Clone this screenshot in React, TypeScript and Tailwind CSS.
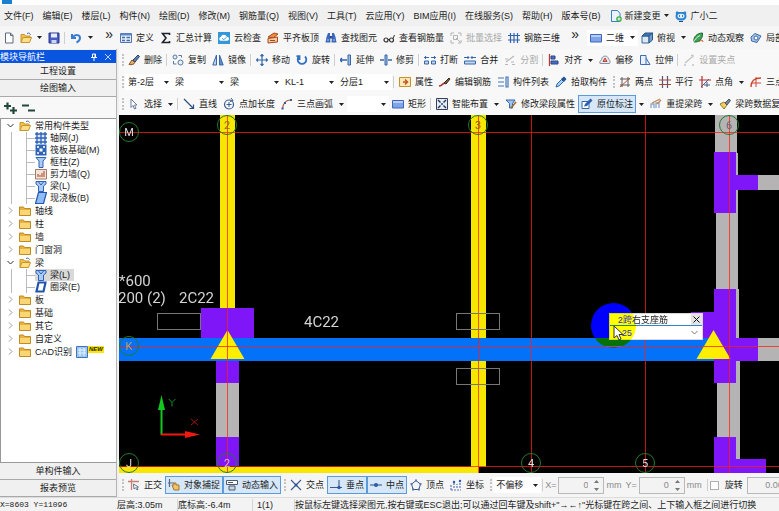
import { ReactNode } from 'react';
import clsx from 'clsx';

const ICONS: Record<string, ReactNode> = {
  file: <path d="M2.500 1h5l2.500 2.500V11h-7.500zM7.500 1v2.500H10" fill="#fff" stroke="#5b6b80" />,
  open: (
    <>
      <path d="M1 10.500V2.500h3.500l1 1.500H10v2" fill="#f3c34d" stroke="#c9952f" />
      <path d="M1 10.500 3 5.500h8.500l-2 5z" fill="#ffdf83" stroke="#c9952f" />
      <path d="M7 1.500c2-1 3 0 3.500 1.200" fill="none" stroke="#3a6ea8" />
    </>
  ),
  save: (
    <>
      <path d="M1 1h10v10H1z" fill="#4a5cc4" stroke="#2a3688" />
      <path d="M3 1.500h6v4H3z" fill="#e9eefc" />
      <path d="M3.500 8h5v3h-5z" fill="#cdd5f4" />
    </>
  ),
  undo: <path d="M2 2v4h4M2.500 5.500C5 2 10 2.500 10 6c0 2-1.500 3.500-3.500 4.500" fill="none" stroke="#3a7bd0" strokeWidth="2" />,
  define: (
    <>
      <path d="M.5 1.500h11v9H.500z" fill="#e5edf9" stroke="#5274b0" />
      <path d="M.5 1.500h11v2H.500z" fill="#5c86cc" />
      <path d="M2 5.500h3M2 8.500h3M6.500 5.500H10M6.500 8.500H10" stroke="#4a6cab" strokeWidth="1.500" />
    </>
  ),
  sum: <path d="M9.500 3V1.500H2.500L6 6l-3.500 4.500h7V9" fill="none" stroke="#1d2430" strokeWidth="1.600" />,
  cloud: (
    <>
      <rect width="12" height="12" fill="#3497d8" />
      <path d="M2.500 8.800a2 2 0 0 1 .3-3.800 3.200 3.200 0 0 1 6-.2 2 2 0 0 1 .5 4z" fill="#fff" />
      <path d="m4.200 6.300 1.600 1.500 2.500-2.600" fill="none" stroke="#3497d8" />
    </>
  ),
  slab: (
    <>
      <path d="M1 5 7 1l4 1-5 4z" fill="#f08c3c" stroke="#a8481c" />
      <path d="M1 6.500 10.500 5v5L1 11z" fill="#f4c9a0" stroke="#a8481c" />
      <path d="M3 8.500h5" stroke="#a8481c" />
    </>
  ),
  find: (
    <>
      <path d="M3 1h2v3l.5 6.500h-5L1.500 5zM7 1h2l1.500 4 1 5.500h-5L7 4z" fill="#3b68b8" />
      <path d="M5 4h2v2.500H5z" fill="#254a90" />
      <path d="M2 8h2M8 8h2" stroke="#b5cdf2" />
    </>
  ),
  glasses: (
    <>
      <circle cx="3" cy="8" r="2" fill="none" stroke="#333" strokeWidth="1.200" />
      <circle cx="8.500" cy="8" r="2" fill="none" stroke="#333" strokeWidth="1.200" />
      <path d="M5 7.500h1.500M10 6.500 11.500 3" stroke="#333" fill="none" />
    </>
  ),
  batch: (
    <g stroke="#b3b3b3" fill="none">
      <path d="M1 4V1h3M8 1h3v3M11 8v3H8M4 11H1V8" />
      <path d="M3.500 3.500h4v4h-4zM6 6l4 4" />
    </g>
  ),
  rebar: <path d="M2.500 1v10M6 1v10M9.500 1v10M0 3.500h12M0 8h12" stroke="#3463ae" strokeWidth="1.200" fill="none" />,
  rect: (
    <>
      <path d="M.5 2.500h11v7.500H.500z" fill="#7fa4ea" stroke="#4166b8" />
      <path d="M1 3h10v2H1z" fill="#b7cdf7" />
    </>
  ),
  cube: (
    <>
      <path d="M1 4h7v7H1z" fill="#dbe8f6" stroke="#3b6797" />
      <path d="m1 4 3-3h7.500L8 4z" fill="#3f77b5" stroke="#2a5688" />
      <path d="m8 4 3.500-3v7L8 11z" fill="#6d9bcb" stroke="#2a5688" />
    </>
  ),
  orbit: (
    <>
      <path d="M2 10C1 5 5 1 10.500 1 11 7 7 10.500 2 10z" fill="#3aa655" stroke="#1d6b34" />
      <path d="M1 11c2-4 4-6 7-7.500" stroke="#e5f5e8" fill="none" />
      <path d="M7 9.500 10 8l1 2" stroke="#d06030" fill="none" />
    </>
  ),
  part: (
    <>
      <path d="m1 5 4-3.500L11 4 7 10.500 1.500 9z" fill="#a8c6ea" stroke="#3c6aa5" />
      <circle cx="6" cy="6" r="2" fill="#fff" stroke="#3c6aa5" />
    </>
  ),
  erase: (
    <>
      <path d="m5 6 5-5 1.500 1.500L7 8z" fill="#5d7fae" stroke="#2d4468" />
      <path d="M1 10.500 4 6l3 2.500C6 10.500 3.500 11 1 10.500z" fill="#e3b06a" stroke="#8a4b22" />
    </>
  ),
  copy: (
    <g fill="#e6eef8" stroke="#5878a5">
      <circle cx="3" cy="3" r="2" />
      <circle cx="8.500" cy="8.500" r="2.500" />
      <path d="M6.500 1.500h3v2M1.500 7v3h3" fill="none" />
    </g>
  ),
  mirror: (
    <>
      <path d="M4.500 1v10H.800z" fill="#bcd4f2" stroke="#3a68a8" />
      <path d="M7.500 1v10h3.700z" fill="#5c8dd0" stroke="#3a68a8" />
    </>
  ),
  move: <path d="M6 .500v11M.500 6h11M4.500 2 6 .500 7.500 2M4.500 10 6 11.500 7.500 10M2 4.500.500 6 2 7.500M10 4.500 11.500 6 10 7.500" fill="none" stroke="#3566a8" strokeWidth="1.200" />,
  rotate: <path d="M3 2.500a4.300 4.300 0 1 0 6 0M3.500 6V2.200H.500" fill="none" stroke="#2f6fc4" strokeWidth="1.800" />,
  extend: (
    <>
      <path d="M0 6h7M2 4 0 6l2 2" fill="none" stroke="#3566a8" strokeWidth="1.300" />
      <path d="M8 1h2.500v10H8z" fill="#9dbce4" stroke="#3566a8" />
    </>
  ),
  trim: (
    <>
      <path d="M0 6h4M8 6h4" stroke="#3566a8" strokeWidth="1.300" />
      <path d="M5 1h2v10H5z" fill="#9dbce4" stroke="#3566a8" />
    </>
  ),
  split: (
    <>
      <path d="M.5 7h4v3h-4zM7.500 7h4v3h-4z" fill="#c5d8f1" stroke="#3566a8" />
      <path d="M0 3.500h5M7 3.500h5M2 2 .500 3.500 2 5M10 2l1.500 1.500L10 5" fill="none" stroke="#3566a8" />
    </>
  ),
  merge: (
    <>
      <path d="M.5 7h11v3H.500z" fill="#c5d8f1" stroke="#3566a8" />
      <path d="M0 3.500h5M7 3.500h5M3.500 2 5 3.500 3.500 5M8.500 2 7 3.500 8.500 5" fill="none" stroke="#3566a8" />
    </>
  ),
  cut: <path d="M1 10.500h3M8 10.500h3M2 8l8-6M1 5h3M7 8h3" fill="none" stroke="#b8b8b8" strokeWidth="1.200" />,
  align: (
    <>
      <path d="M1.500 0v12" stroke="#c0392b" strokeWidth="1.300" />
      <path d="M3 2h4v3H3zM3 7h7v3H3z" fill="#4a6fc0" stroke="#274790" />
    </>
  ),
  offset: (
    <>
      <path d="M1 9.500c-1-2 1-3 1.500-4C3 1 9 1 9.500 5c1 1 2.500 2.500 1 4.500z" fill="#e9e9ef" stroke="#8a8fa2" />
      <path d="M4 7.500 6 4l2 3.500z" fill="#e38d7c" stroke="#b44a3a" />
    </>
  ),
  stretch: <path d="M1.500 1.500H7v9H1.500zM7 4l4 6.500H5" fill="#eaf1fb" stroke="#3b6cb5" />,
  grip: <path d="M1 11h2M9 11h2M2 9l7-6M8 1.500h2v2" fill="none" stroke="#c3c3c3" strokeWidth="1.300" />,
  prop: (
    <>
      <path d="M.5 1.500h11v9H.500z" fill="#fbe9b5" stroke="#c48f2d" />
      <path d="M4 6h5M6 3.500 8.500 6 6 8.500" fill="none" stroke="#c4542a" strokeWidth="1.500" />
    </>
  ),
  editbar: (
    <>
      <path d="M0 10c3 0 3-2.500 6-3" fill="none" stroke="#a33" strokeWidth="1.500" />
      <path d="m5 7 5-5 1 1-4 5z" fill="#7c5a3a" stroke="#3e2b1b" />
    </>
  ),
  list: <path d="M1 2h6M1 6h6M1 10h6M9 1v10h2V1z" fill="none" stroke="#4576ba" strokeWidth="1.200" />,
  pick: (
    <>
      <path d="m1 11 1-3 4.500-4.500 2 2L4 10z" fill="#a8d0f5" stroke="#2c6ab0" />
      <path d="m6 3 3-2.500L11.500 3 9 6z" fill="#24558f" />
    </>
  ),
  two: (
    <>
      <path d="M3 1v10M9 1v10M1 9h10M1 3h10" stroke="#5c5c5c" fill="none" />
      <path d="m1 11 10-9" stroke="#b5502e" />
    </>
  ),
  parallel: (
    <>
      <path d="M3.500 0v12M8.500 0v12" stroke="#4b5a86" strokeWidth="1.200" />
      <path d="M0 4h12M0 8.500h12" stroke="#b5402e" strokeWidth="1.200" />
    </>
  ),
  angle: (
    <>
      <path d="M3 0v12M0 4h12" stroke="#b5302e" strokeWidth="1.200" />
      <path d="m2 11 8-8M8 6v5M5 9h6" stroke="#4b5a86" fill="none" />
    </>
  ),
  axis3: (
    <>
      <path d="M1 11C1 5 4 2 11 2" stroke="#d0442e" strokeWidth="1.400" fill="none" />
      <path d="M6 1v10M2 7h9" stroke="#d0442e" />
    </>
  ),
  pointer: <path d="M3 1v8.500l2-2 1.500 3.500 1.500-.7L6.500 7H9z" fill="#fff" stroke="#6b7d9c" />,
  line: (
    <>
      <path d="m1 1 9 9" stroke="#2f4f80" strokeWidth="1.200" />
      <path d="M10.500 6.500v4h-4" fill="none" stroke="#2f4f80" strokeWidth="1.200" />
    </>
  ),
  pointlen: (
    <>
      <circle cx="6" cy="6.500" r="4.500" fill="none" stroke="#3b5c92" strokeWidth="1.200" />
      <path d="M6 4v5M3.500 6.500h5M8 0l2 2.500-3 1" fill="none" stroke="#3b5c92" />
    </>
  ),
  arc: (
    <>
      <path d="M1.500 11C2 5 5 2 10 2" fill="none" stroke="#b55a50" strokeWidth="1.200" />
      <path d="M.5 9.500h2v2h-2zM9 1h2v2H9zM3 4h2v2H3z" fill="#3b5c92" />
    </>
  ),
  smart: (
    <>
      <path d="M.5.500h11v11H.500z" fill="#e8edf5" stroke="#33435e" />
      <path d="m2 2 2.500 2.500M10 2 7.500 4.500M2 10l2.500-2.500M10 10 7.500 7.500" stroke="#22324e" strokeWidth="1.400" />
      <path d="M5 5h2v2H5z" fill="#3f73c0" />
    </>
  ),
  beamedit: (
    <>
      <path d="M1 2h9L7.500 5.500V10h-3V5.500z" fill="#9fc3ef" stroke="#3268ae" />
      <path d="m6 10 5-6" stroke="#a46a2c" strokeWidth="1.600" />
    </>
  ),
  inplace: (
    <>
      <path d="M1 3.500h7v7H1z" fill="#fff" stroke="#3268ae" />
      <path d="m3 8.500 1-2.500 5.500-5.500 2 2L6 8z" fill="#2d62b0" />
    </>
  ),
  respan: (
    <>
      <path d="M1 10V6h3v4M6 10V5h3v5" fill="none" stroke="#8ba6cc" strokeWidth="1.300" />
      <path d="m2 5 8-4M7 6l4-4" stroke="#c08658" strokeWidth="1.300" />
    </>
  ),
  spancopy: (
    <>
      <path d="m1 6 4-2 3 3-3 4z" fill="#f1cf63" stroke="#9b7b1f" />
      <path d="m6 5 4-4 1.500 1.500L8 7z" fill="#7b8493" stroke="#4d5561" />
    </>
  ),
  newdoc: (
    <>
      <path d="M1.500.500h6l2.500 3v8h-8.500z" fill="#eaf3fd" stroke="#3d7dbb" />
      <circle cx="9" cy="9" r="2.800" fill="#3eb049" />
      <path d="M9 7.500v3M7.500 9h3" stroke="#fff" />
    </>
  ),
  mascot: (
    <>
      <path d="M1 4C0 1.500 2 1 3.500 2h5C10 1 12 1.500 11 4c1.500 4-1 6.500-5 6.500S-.500 8 1 4z" fill="#2f84d2" />
      <ellipse cx="6" cy="6" rx="3.500" ry="2.300" fill="#d9efff" />
      <path d="M4.500 5.300v1.400M7.500 5.300v1.400M4 11.500h4" stroke="#14508c" />
    </>
  ),
  ortho: (
    <>
      <path d="M3.500 0v11M0 2.500h11" stroke="#c98074" strokeWidth="1.300" />
      <path d="m5.500 5 .5 5 1.500-1.300L9 11l1-.700-1.300-2.200L10.500 8z" fill="#fff" stroke="#67748c" />
    </>
  ),
  snap: (
    <>
      <path d="M1.500 0v8M0 4h6" stroke="#59677f" strokeWidth="1.200" />
      <path d="M4 6h2V4h2v2h3v5H6z" fill="#f0c46a" stroke="#a3742a" />
    </>
  ),
  dyn: (
    <>
      <path d="M.5 1.500h11v4H.500z" fill="#fff" stroke="#4c5a70" />
      <path d="M3 7h6v4H3z" fill="#cdd5e0" stroke="#4c5a70" />
      <path d="M2 3.500h5" stroke="#4c5a70" />
    </>
  ),
  cross: (
    <>
      <path d="m1 1 10 10M11 1 1 11" stroke="#405a86" strokeWidth="1.100" />
      <circle cx="6" cy="6" r="1.500" fill="#2859a8" />
    </>
  ),
  perp: (
    <>
      <path d="M0 8.500h12M9 1v7.500" stroke="#405a86" strokeWidth="1.100" />
      <circle cx="9" cy="8.500" r="1.700" fill="#2859a8" />
    </>
  ),
  mid: (
    <>
      <path d="M0 6h12" stroke="#405a86" strokeWidth="1.100" />
      <circle cx="6" cy="6" r="2" fill="#2859a8" />
    </>
  ),
  vertex: (
    <>
      <path d="m6 1.500 4.500 3.700-1.700 5.300H3.200L1.500 5.200z" fill="none" stroke="#405a86" />
      <path d="M5 .500h2v2H5zM9.500 4h2v2h-2zM.500 4h2v2h-2zM2 9.500h2v2H2zM8 9.500h2v2H8z" fill="#5a7bb5" />
    </>
  ),
  coord: (
    <>
      <path d="M1 11V5M1 11h10M4 9V3M7 9V5M10 9V1" stroke="#5a7bb5" strokeWidth="1.200" strokeDasharray="2 1" />
      <circle cx="4" cy="3" r="1.200" fill="#2859a8" />
      <circle cx="10" cy="2" r="1.200" fill="#2859a8" />
    </>
  ),
  folder: (
    <>
      <path d="M.5 2h4l1 1.500h6v7H.500z" fill="#e8b23f" stroke="#c08a24" />
      <path d="M1 5h10v5H1z" fill="#fbd675" />
    </>
  ),
  grid: (
    <>
      <path d="M.5.500h11v11H.500z" fill="#dce8fa" />
      <path d="M2 0v12M6 0v12M10 0v12M0 2h12M0 6h12M0 10h12" stroke="#2f62b5" strokeWidth="1.300" />
    </>
  ),
  raft: (
    <>
      <path d="M.5.500h11v11H.500z" fill="#2f62b5" />
      <path d="M2 2h2v2H2zM8 2h2v2H8zM2 8h2v2H2zM8 8h2v2H8z" fill="#cfe0f8" />
      <path d="M4.500 4.500h3v3h-3z" fill="#fff" />
    </>
  ),
  column: <path d="M1 1.500h10L8 5v6.500H4V5z" fill="#a9cbf4" stroke="#2f62b5" />,
  wall: (
    <>
      <path d="M.5 1.500h11v9.500H.500z" fill="#f3e4da" stroke="#a77a64" />
      <path d="M3 9V6M5 9V7M7 9V5M9 9V3" stroke="#b55a40" strokeWidth="1.200" />
    </>
  ),
  beam: (
    <>
      <path d="M1 1.500h10v2.500L8.500 6v5.500h-5V6L1 4z" fill="#a9cbf4" stroke="#2f62b5" />
      <path d="m3.500 2 2.500 3 2.500-3" fill="none" stroke="#2f62b5" />
    </>
  ),
  floor: <path d="M3.500.500h8l-3 11h-8z" fill="#8ebcf5" stroke="#2355ad" strokeWidth="1.200" />,
  ring: <path d="M3.500 1.500h7l-2 9h-7z" fill="#fff" stroke="#2355ad" strokeWidth="2.200" />,
  cad: (
    <>
      <path d="M.5.500h11v11H.500z" fill="#9cc5f2" stroke="#3e76b8" />
      <path d="M2 4h8M2 7h8M4 2v8M8 2v8" stroke="#e9f3fe" />
    </>
  ),
};

const Icon = ({ name }: { name: string }) => (
  <svg className="w-3 h-3 shrink-0" viewBox="0 0 12 12" fill="none" aria-hidden="true">
    {ICONS[name]}
  </svg>
);

const Arrow = () => (
  <svg className="w-[5px] h-[3px] mx-[3px] shrink-0" viewBox="0 0 5 3" aria-hidden="true">
    <path d="M0 0h5L2.500 3z" fill="#222" />
  </svg>
);

const Sep = () => <span className="w-px h-3 ml-px mr-0.5 bg-[#cfcfcf] shrink-0" />;
const Grip = () => <span className="h-3 ml-[3px] w-[3px] border-l-2 border-dotted border-[#c4c4c4] shrink-0" />;

interface ToolProps {
  icon: string;
  label: string;
  menu?: boolean;
  disabled?: boolean;
  pressed?: boolean;
}

const Tool = ({ icon, label, menu, disabled, pressed }: ToolProps) => (
  <>
    <button
      type="button"
      disabled={disabled}
      aria-pressed={pressed}
      className={clsx(
        'flex items-center gap-1 shrink-0 whitespace-nowrap',
        pressed ? 'h-[18px] px-0.5 border border-[#5a9bd8] bg-[#d5e7f8]' : 'px-[3px]',
        disabled && 'text-[#a8a8a8]'
      )}
    >
      <Icon name={icon} />
      {label}
    </button>
    {menu && <Arrow />}
  </>
);

const Combo = ({ name, value, className }: { name: string; value: string; className: string }) => (
  <label className={clsx('relative flex items-center h-4 bg-white shrink-0', className)}>
    <select aria-label={name} className="appearance-none w-full h-4 pl-[3px] pr-3 bg-transparent outline-none">
      <option>{value}</option>
    </select>
    <span className="absolute right-0 pointer-events-none">
      <Arrow />
    </span>
  </label>
);

const MENUS = [
  '文件(F)',
  '编辑(E)',
  '楼层(L)',
  '构件(N)',
  '绘图(D)',
  '修改(M)',
  '钢筋量(Q)',
  '视图(V)',
  '工具(T)',
  '云应用(Y)',
  'BIM应用(I)',
  '在线服务(S)',
  '帮助(H)',
  '版本号(B)',
];

interface TreeNode {
  label: string;
  children?: { icon: string; label: string; selected?: boolean }[];
  isNew?: boolean;
}

const TREE: TreeNode[] = [
  {
    label: '常用构件类型',
    children: [
      { icon: 'grid', label: '轴网(J)' },
      { icon: 'raft', label: '筏板基础(M)' },
      { icon: 'column', label: '框柱(Z)' },
      { icon: 'wall', label: '剪力墙(Q)' },
      { icon: 'beam', label: '梁(L)' },
      { icon: 'floor', label: '现浇板(B)' },
    ],
  },
  { label: '轴线' },
  { label: '柱' },
  { label: '墙' },
  { label: '门窗洞' },
  {
    label: '梁',
    children: [
      { icon: 'beam', label: '梁(L)', selected: true },
      { icon: 'ring', label: '圈梁(E)' },
    ],
  },
  { label: '板' },
  { label: '基础' },
  { label: '其它' },
  { label: '自定义' },
  { label: 'CAD识别', isNew: true },
];

const TreeGroup = ({ node }: { node: TreeNode }) => (
  <li>
    <div className="flex items-center h-[13px]">
      <svg className="w-[7px] h-[7px] ml-1.5 mr-[5px]" viewBox="0 0 7 7" fill="none" aria-hidden="true">
        <path d={node.children ? 'M.5 2l3 3 3-3' : 'M2 .500l3 3-3 3'} stroke={node.children ? '#333' : '#999'} />
      </svg>
      <Icon name={node.children ? 'open' : 'folder'} />
      <span className="ml-1">{node.label}</span>
      {node.isNew && (
        <span className="flex items-start ml-1">
          <Icon name="cad" />
          <b className="bg-[#ffe600] text-[6px] leading-[7px] italic px-px">NEW</b>
        </span>
      )}
    </div>
    {node.children && (
      <ul className="ml-[10px] border-l border-[#bbb]">
        {node.children.map((child) => (
          <li key={child.label} className="flex items-center h-3 ml-[14px] border-l border-[#bbb]">
            <span className="w-2 h-px bg-[#bbb]" />
            <button
              type="button"
              className={clsx('flex items-center h-3 gap-[3px] pr-1 leading-3', child.selected && 'bg-[#d9d9d9]')}
            >
              <Icon name={child.icon} />
              {child.label}
            </button>
          </li>
        ))}
      </ul>
    )}
  </li>
);

const PanelButton = ({ label }: { label: string }) => (
  <button type="button" className="block w-full h-[17px] leading-4 text-[9px] bg-[#f0f0f0] border-b border-[#a9a9a9]">
    {label}
  </button>
);

const Sidebar = () => (
  <aside className="flex flex-col w-[117px] shrink-0 border-r border-[#b5b5b5]">
    <div className="flex items-center h-[13px] mt-px bg-[#0a55e0] text-white">
      <h2>模块导航栏</h2>
      <button type="button" aria-label="固定" className="ml-auto">
        <svg className="w-2 h-2" viewBox="0 0 8 8" fill="none" stroke="#fff">
          <path d="M2.500 1h3v3.500h-3zM1 4.500h6M4 4.500V8M5 1v3.500" />
        </svg>
      </button>
      <button type="button" aria-label="关闭" className="ml-1.5 mr-1">
        <svg className="w-2 h-2" viewBox="0 0 8 8" fill="none" stroke="#b9d0ff">
          <path d="m1 1 6 6M7 1 1 7" />
        </svg>
      </button>
    </div>
    <PanelButton label="工程设置" />
    <PanelButton label="绘图输入" />
    <div className="flex items-center gap-1 h-[22px] pl-1 border-b border-[#999] bg-[#f8f8f8]">
      <button type="button" aria-label="展开全部">
        <svg className="w-3.5 h-3" viewBox="0 0 14 12" stroke="#23493c" strokeWidth="2.200">
          <path d="M0 4h7M3.500.500v7M6 8.500h7M9.500 5v7" />
        </svg>
      </button>
      <button type="button" aria-label="折叠全部">
        <svg className="w-3.5 h-3" viewBox="0 0 14 12" stroke="#23493c" strokeWidth="2">
          <path d="M0 3.500h7M6 8.500h7" />
        </svg>
      </button>
    </div>
    <ul className="flex-1 min-h-0 overflow-hidden bg-white border-l border-b border-[#999]">
      {TREE.map((node) => (
        <TreeGroup key={node.label} node={node} />
      ))}
    </ul>
    <PanelButton label="单构件输入" />
    <PanelButton label="报表预览" />
  </aside>
);

const BUBBLES = [
  { x: 10, y: 17, text: 'M', color: '#ddd' },
  { x: 10, y: 231, text: 'K', color: '#c2a25a' },
  { x: 10, y: 348, text: 'J', color: '#ddd' },
  { x: 108, y: 10, text: '2', color: '#8a7420' },
  { x: 359, y: 10, text: '3', color: '#8a5a20' },
  { x: 610, y: 10, text: '6', color: '#5d6a78' },
  { x: 108, y: 348, text: '2', color: '#c9b8e8' },
  { x: 412, y: 348, text: '4', color: '#ddd' },
  { x: 526, y: 348, text: '5', color: '#ddd' },
];

const Drawing = () => (
  <svg className="block w-full h-full" role="img" aria-label="梁平面图">
    <g fill="#b5b3b3">
      <path d="M97 268h23v54H97z" />
      <path d="M596 0h22v38h-22zM616 38h3v60h-3zM597 98h22v76h-22zM617 174h3v50h-3zM598 246h23v98h-23z" />
      <path d="M639 60h2000v15H639zM639 223h2000v23H639z" />
    </g>
    <path d="M101 0h15v193h-15zM352 0h15v352h-15zM0 352h360v6H0z" fill="#f7e600" />
    <g fill="#7f16f8">
      <path d="M82 193h53v30H82zM97 245h23v23H97zM97 322h23v29H97z" />
      <path d="M595 37h22v23h22v15h-22v23h-22z" />
      <path d="M595 174h22v49h22v23h-22v22h-22V223h-23v-26h23z" />
      <path d="M595 322h22v22h30v14h-52z" />
    </g>
    <path d="M0 223h595v23H0z" fill="#0472f8" />
    <path d="m108.500 215 17 29h-34zM594.500 215l17 29h-34z" fill="#ffee00" />
    <g fill="none" stroke="#ff1e12" strokeOpacity="0.750" shapeRendering="crispEdges">
      <path d="M0 17.500h3000M0 231.500h3000M0 351.500h3000" />
      <path d="M108.500 0v358M359.500 0v358M412.500 0v358M526.500 0v358M610.500 0v358" />
    </g>
    <g fill="none" stroke="#777" shapeRendering="crispEdges">
      <path d="M38.500 198.500h43v16h-43zM337.500 198.500h43v16h-43zM337.500 253.500h43v16h-43z" />
    </g>
    {BUBBLES.map(({ x, y, text, color }) => (
      <g key={`${x}-${y}`}>
        <circle cx={x} cy={y} r="9.500" fill="none" stroke="#237a2c" />
        <text x={x} y={y + 4} textAnchor="middle" fill={color} className="text-[11px] font-['Roboto',sans-serif]">
          {text}
        </text>
      </g>
    ))}
    <g fill="#d4d4d4" className="text-[15px] font-['Roboto',sans-serif]">
      <text x="0" y="171">*600</text>
      <text x="-1" y="188">200 (2)</text>
      <text x="60" y="188">2C22</text>
      <text x="185" y="212">4C22</text>
    </g>
    <path d="M42.500 320v-26" stroke="#12c81e" strokeWidth="2" />
    <path d="m42.500 280 3.500 15h-7z" fill="#12c81e" />
    <path d="M42 319.500h26" stroke="#f01a10" strokeWidth="2" />
    <path d="m81 319.500-15 3.500v-7z" fill="#f01a10" />
    <path d="m50 284 3 3.500 3.500-3.500M53 287.500v4" stroke="#178a22" fill="none" />
    <path d="m72 304 7 6M79 304l-7 6" stroke="#a01414" fill="none" />
  </svg>
);

// The editor sits on the right support of the span, with the pointer highlight on top.
const SupportEditor = () => (
  <div className="absolute left-[490px] top-[198px] w-[94px] bg-white border border-[#d8d8d8]">
    <div className="flex items-center h-3 pl-2 border-b border-[#2b86d0]">
      <label htmlFor="support" className="whitespace-nowrap">
        2跨右支座筋
      </label>
      <button type="button" aria-label="关闭" className="ml-auto h-[11px] px-0.5 bg-[#e4e4e4]">
        <svg className="w-[7px] h-[7px]" viewBox="0 0 7 7" stroke="#111">
          <path d="m.5.500 6 6M6.500.500l-6 6" />
        </svg>
      </button>
    </div>
    <div className="flex items-center h-[13px] pl-3 pr-1">
      <input id="support" defaultValue="25" className="w-0 flex-1 h-3 outline-none" />
      <svg className="w-[7px] h-[5px]" viewBox="0 0 7 5" fill="none" stroke="#777">
        <path d="m.5 1 3 3 3-3" />
      </svg>
    </div>
    <span className="absolute -left-[19px] -top-[11px] w-[45px] h-[45px] rounded-full bg-[#0000ff] mix-blend-difference pointer-events-none" />
    <svg className="absolute left-[3px] top-[11px] w-3 h-4 pointer-events-none" viewBox="0 0 12 16">
      <path d="M1 1v12l3-2.500 2 4.500 2-1-2-4.500h4z" fill="#fff" stroke="#333" />
    </svg>
  </div>
);

const Offset = ({ axis }: { axis: string }) => (
  <label className="flex items-center gap-0.5 mr-1 text-[#8a8a8a] shrink-0">
    {axis}=
    <span className="flex items-center w-[46px] h-[17px] bg-[#f3f3f3] border border-[#b9b9b9]">
      <input defaultValue="0" className="w-0 flex-1 text-right outline-none" />
      <svg className="w-[5px] h-[13px] ml-1.5 mr-1" viewBox="0 0 5 13" fill="#777" aria-hidden="true">
        <path d="M0 4h5L2.500 1zM0 9h5l-2.500 3z" />
      </svg>
    </span>
    mm
  </label>
);

const SnapBar = () => (
  <div className="flex items-center h-6 shrink-0 bg-[#f5f5f5] overflow-hidden">
    <Grip />
    <Tool icon="ortho" label="正交" />
    <Tool icon="snap" label="对象捕捉" pressed />
    <Tool icon="dyn" label="动态输入" pressed />
    <Grip />
    <Tool icon="cross" label="交点" />
    <Tool icon="perp" label="垂点" pressed />
    <Tool icon="mid" label="中点" pressed />
    <Tool icon="vertex" label="顶点" />
    <Tool icon="coord" label="坐标" />
    <Grip />
    <Combo name="偏移方式" value="不偏移" className="w-12" />
    <Sep />
    <Offset axis="X" />
    <Offset axis="Y" />
    <Sep />
    <label className="flex items-center gap-1.5 mr-1 shrink-0">
      <input type="checkbox" className="appearance-none w-[9px] h-[9px] bg-white border border-[#b0b0b0]" />
      旋转
    </label>
    <input
      aria-label="旋转角度"
      defaultValue="0.000"
      className="w-[46px] h-[17px] px-1 shrink-0 text-right text-[#8a8a8a] bg-[#f3f3f3] border border-[#b9b9b9]"
    />
  </div>
);

const StatusBar = () => (
  <footer className="flex items-end h-3.5 shrink-0 bg-[#f3f3f3] border-t border-[#dcdcdc] whitespace-nowrap overflow-hidden leading-3">
    <span className="w-[117px] shrink-0 text-[8px] font-['Liberation_Mono',monospace]">X=8603 Y=11096</span>
    <span className="w-[61px] shrink-0 border-r border-[#d5d5d5]">层高:3.05m</span>
    <span className="w-[75px] shrink-0 border-r border-[#d5d5d5]">底标高:-6.4m</span>
    <span className="w-[42px] shrink-0 pl-1 border-r border-[#d5d5d5]">1(1)</span>
    <span className="flex-1">
      按鼠标左键选择梁图元,按右键或ESC退出;可以通过回车键及shift+"→←↑"光标键在跨之间、上下输入框之间进行切换
    </span>
  </footer>
);

const App = () => {
  return (
    <div className="flex flex-col h-screen overflow-hidden bg-[#f0f0f0] text-[9px] leading-3 text-[#1c1c1c] font-['Liberation_Sans','Noto_Sans_CJK_SC',sans-serif]">
      <header className="h-[5px] shrink-0 bg-white">
        <span className="block w-2.5 h-1 ml-0.5 bg-[#1b7fd0]" />
      </header>
      <nav className="flex items-center h-[21px] shrink-0 pl-1 gap-[9px] whitespace-nowrap overflow-hidden">
        {MENUS.map((menu) => (
          <button key={menu} type="button" className="shrink-0">
            {menu}
          </button>
        ))}
        <div className="flex items-center">
          <Icon name="newdoc" />
          <button type="button" className="ml-[3px]">
            新建变更
          </button>
          <Arrow />
          <Tool icon="mascot" label="广小二" />
        </div>
      </nav>

      <div className="flex h-[23px] shrink-0 bg-[#f6f6f6] overflow-hidden">
        <div className="flex items-center w-[117px] shrink-0 pl-[3px]">
          <button type="button" aria-label="新建">
            <Icon name="file" />
          </button>
          <button type="button" aria-label="打开" className="ml-[5px] mr-0.5">
            <Icon name="open" />
          </button>
          <Arrow />
          <button type="button" aria-label="保存" className="mx-[3px]">
            <Icon name="save" />
          </button>
          <Sep />
          <button type="button" aria-label="撤销" className="mx-[3px]">
            <Icon name="undo" />
          </button>
          <Arrow />
          <span className="ml-auto mr-1 mb-2 text-sm leading-3">»</span>
        </div>
        <div className="flex items-center flex-1 min-w-0">
          <Tool icon="define" label="定义" />
          <Tool icon="sum" label="汇总计算" />
          <Tool icon="cloud" label="云检查" />
          <Tool icon="slab" label="平齐板顶" />
          <Tool icon="find" label="查找图元" />
          <Tool icon="glasses" label="查看钢筋量" />
          <Tool icon="batch" label="批量选择" disabled />
          <Tool icon="rebar" label="钢筋三维" />
          <span className="mx-2 mb-2 text-sm leading-3">»</span>
          <div className="flex items-center h-4 bg-white">
            <Tool icon="rect" label="二维" menu />
          </div>
          <Tool icon="cube" label="俯视" menu />
          <Tool icon="orbit" label="动态观察" />
          <Tool icon="part" label="局部" />
        </div>
      </div>

      <div className="flex flex-1 min-h-0">
        <Sidebar />
        <main className="flex flex-col flex-1 min-w-0 ml-0.5">
          <div className="flex items-center h-[22px] shrink-0 bg-[#f8f8f8] overflow-hidden">
            <Grip />
            <Tool icon="erase" label="删除" />
            <Sep />
            <Tool icon="copy" label="复制" />
            <Tool icon="mirror" label="镜像" />
            <Sep />
            <Tool icon="move" label="移动" />
            <Tool icon="rotate" label="旋转" />
            <Sep />
            <Tool icon="extend" label="延伸" />
            <Tool icon="trim" label="修剪" />
            <Sep />
            <Tool icon="split" label="打断" />
            <Tool icon="merge" label="合并" />
            <Tool icon="cut" label="分割" disabled />
            <Sep />
            <Tool icon="align" label="对齐" />
            <Arrow />
            <Tool icon="offset" label="偏移" />
            <Tool icon="stretch" label="拉伸" />
            <Sep />
            <Tool icon="grip" label="设置夹点" disabled />
          </div>
          <div className="flex items-center h-[22px] shrink-0 bg-[#f8f8f8] overflow-hidden">
            <Grip />
            <Combo name="楼层" value="第-2层" className="w-[47px]" />
            <Combo name="构件类别" value="梁" className="w-[55px]" />
            <Combo name="构件类型" value="梁" className="w-[55px]" />
            <Combo name="构件" value="KL-1" className="w-[55px]" />
            <Combo name="分层" value="分层1" className="w-[55px]" />
            <Sep />
            <Tool icon="prop" label="属性" />
            <Tool icon="editbar" label="编辑钢筋" />
            <Tool icon="list" label="构件列表" />
            <Tool icon="pick" label="拾取构件" />
            <Grip />
            <Tool icon="two" label="两点" />
            <Tool icon="parallel" label="平行" />
            <Tool icon="angle" label="点角" menu />
            <Tool icon="axis3" label="三点" />
          </div>
          <div className="flex items-center h-[22px] shrink-0 bg-[#f8f8f8] overflow-hidden">
            <Grip />
            <Tool icon="pointer" label="选择" menu />
            <Sep />
            <Tool icon="line" label="直线" />
            <Tool icon="pointlen" label="点加长度" />
            <Tool icon="arc" label="三点画弧" menu />
            <Combo name="画弧方式" value="" className="w-[42px]" />
            <Tool icon="rect" label="矩形" />
            <Sep />
            <Tool icon="smart" label="智能布置" menu />
            <Tool icon="beamedit" label="修改梁段属性" />
            <Tool icon="inplace" label="原位标注" pressed />
            <Arrow />
            <Tool icon="respan" label="重提梁跨" menu />
            <Tool icon="spancopy" label="梁跨数据复制" />
          </div>
          <div className="relative flex-1 min-h-0 bg-black overflow-hidden isolate">
            <Drawing />
            <SupportEditor />
          </div>
          <SnapBar />
        </main>
      </div>
      <StatusBar />
    </div>
  );
};

export default App;
